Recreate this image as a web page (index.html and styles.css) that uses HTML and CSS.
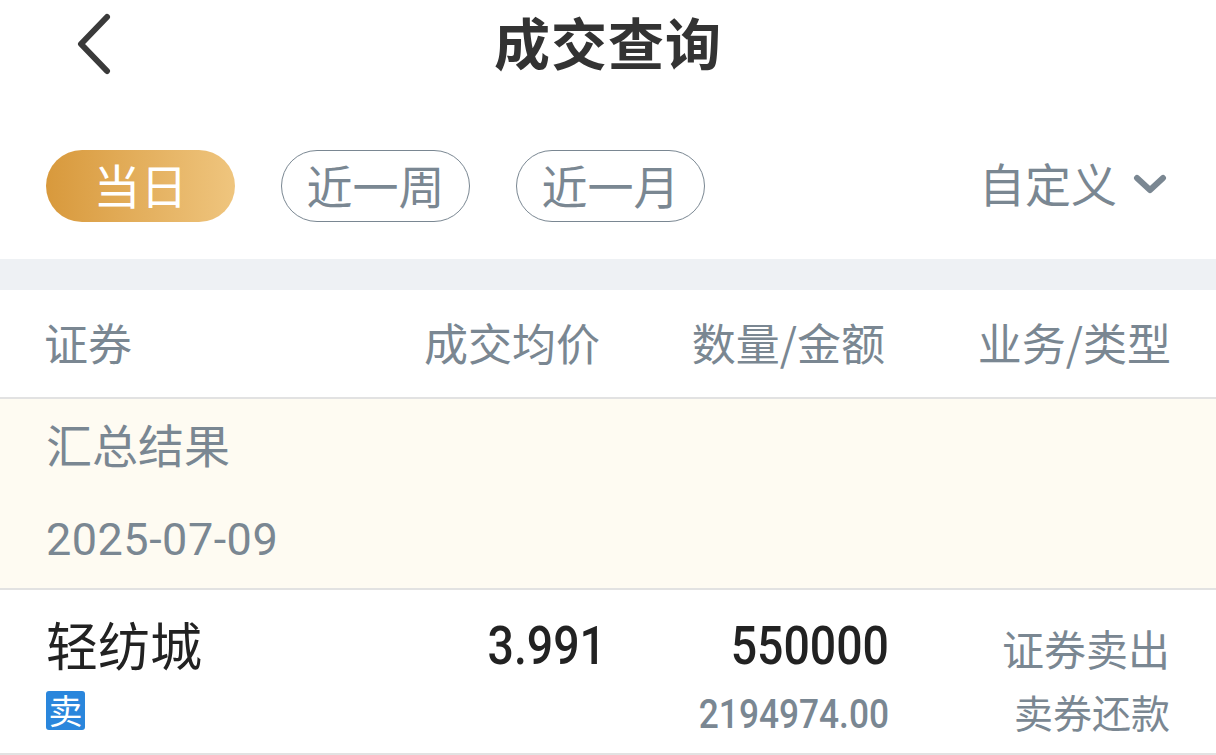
FILE: index.html
```html
<!DOCTYPE html>
<html lang="zh-CN">
<head>
    <meta charset="UTF-8">
    <meta name="viewport" content="width=device-width, initial-scale=1.0">
    <title>成交查询</title>
    <link rel="stylesheet" href="styles.css">
</head>
<body>
    <div class="nav">
        <svg class="back" width="36" height="62" viewBox="0 0 36 62">
            <path d="M31 4 L5 31 L31 58" fill="none" stroke="#3a3a3a" stroke-width="6" stroke-linecap="round" stroke-linejoin="round"/>
        </svg>
        <h1>成交查询</h1>
    </div>

    <div class="filters">
        <span class="pill active">当日</span>
        <span class="pill">近一周</span>
        <span class="pill">近一月</span>
        <div class="custom">
            <span>自定义</span>
            <svg width="34" height="22" viewBox="0 0 34 22">
                <path d="M4 5 L17 17 L30 5" fill="none" stroke="#7a8792" stroke-width="6" stroke-linecap="round" stroke-linejoin="round"/>
            </svg>
        </div>
    </div>

    <div class="band"></div>

    <div class="thead">
        <span class="col-name">证券</span>
        <span class="col-price">成交均价</span>
        <span class="col-qty">数量/金额</span>
        <span class="col-type">业务/类型</span>
    </div>

    <div class="summary">
        <div class="summary-title">汇总结果</div>
        <div class="summary-date">2025-07-09</div>
    </div>

    <div class="row">
        <div class="col-name">
            <div class="stock">轻纺城</div>
            <span class="tag">卖</span>
        </div>
        <div class="col-price">
            <div class="num">3.991</div>
        </div>
        <div class="col-qty">
            <div class="num">550000</div>
            <div class="num sub">2194974.00</div>
        </div>
        <div class="col-type">
            <div class="type-a">证券卖出</div>
            <div class="type-b">卖券还款</div>
        </div>
    </div>
</body>
</html>
```
FILE: styles.css
```css
* {
    margin: 0;
    padding: 0;
    box-sizing: border-box;
}

body {
    font-family: "Noto Sans CJK SC", "Liberation Sans", sans-serif;
    background: #fff;
    color: #222;
    width: 1216px;
    height: 755px;
    overflow: hidden;
}

.nav {
    height: 90px;
    display: flex;
    justify-content: center;
    position: relative;
}

.back {
    position: absolute;
    left: 76px;
    top: 13px;
}

.nav h1 {
    font-size: 56px;
    font-weight: 700;
    color: #333;
    line-height: 82px;
    letter-spacing: 1px;
}

.filters {
    height: 169px;
    padding: 60px 46px 0;
    display: flex;
    align-items: flex-start;
    gap: 46px;
}

.pill {
    width: 189px;
    height: 72px;
    padding-bottom: 5px;
    border: 1px solid #7a8792;
    border-radius: 36px;
    font-size: 46px;
    color: #7a8792;
    display: flex;
    align-items: center;
    justify-content: center;
}

.pill.active {
    border: none;
    color: #fff;
    font-size: 47px;
    background: linear-gradient(90deg, #d8993c, #efc57e);
}

.custom {
    margin-left: auto;
    height: 72px;
    padding-bottom: 9px;
    display: flex;
    align-items: center;
    gap: 16px;
    font-size: 46px;
    color: #7a8792;
    margin-right: 3px;
}

.custom svg {
    margin-top: 5px;
}

.band {
    height: 31px;
    background: #eef1f4;
}

.thead {
    height: 109px;
    padding: 0 45px 4px 44px;
    display: flex;
    align-items: center;
    font-size: 44px;
    color: #7a8792;
    border-bottom: 2px solid #e2e2e2;
}

.col-name {
    width: 340px;
}

.col-price {
    width: 220px;
    text-align: right;
}

.col-qty {
    width: 283px;
    text-align: right;
}

.thead .col-price {
    width: 216px;
}

.thead .col-qty {
    width: 285px;
}

.col-type {
    flex: 1;
    text-align: right;
}

.summary {
    height: 191px;
    background: #fefbf2;
    border-bottom: 2px solid #e2e2e2;
    padding: 0 46px;
    color: #7a8792;
}

.summary-title {
    font-size: 46px;
    line-height: 88px;
}

.summary-date {
    font-family: Roboto, sans-serif;
    font-size: 45px;
    line-height: 94px;
    letter-spacing: 0.5px;
    margin-top: 6px;
}

.row {
    height: 165px;
    display: flex;
    padding: 0 46px;
    border-bottom: 2px solid #e2e2e2;
}

.stock {
    font-size: 52px;
    line-height: 60px;
    margin-top: 24px;
    color: #222;
}

.tag {
    display: block;
    width: 39px;
    height: 39px;
    margin-top: 17px;
    background: #2a86dc;
    border-radius: 3px;
    color: #fff;
    font-size: 34px;
    line-height: 37px;
    text-align: center;
}

.num {
    font-family: Roboto, sans-serif;
    font-weight: 500;
    font-size: 54px;
    line-height: 60px;
    margin-top: 26px;
    color: #222;
    transform: scaleX(0.86);
    transform-origin: right center;
}

.num.sub {
    font-size: 41px;
    line-height: 50px;
    margin-top: 13px;
    color: #7a8792;
}

.type-a,
.type-b {
    line-height: 60px;
    color: #7a8792;
}

.type-a {
    font-size: 42px;
    margin-top: 28px;
}

.type-b {
    font-size: 39px;
    margin-top: 3px;
}
```
